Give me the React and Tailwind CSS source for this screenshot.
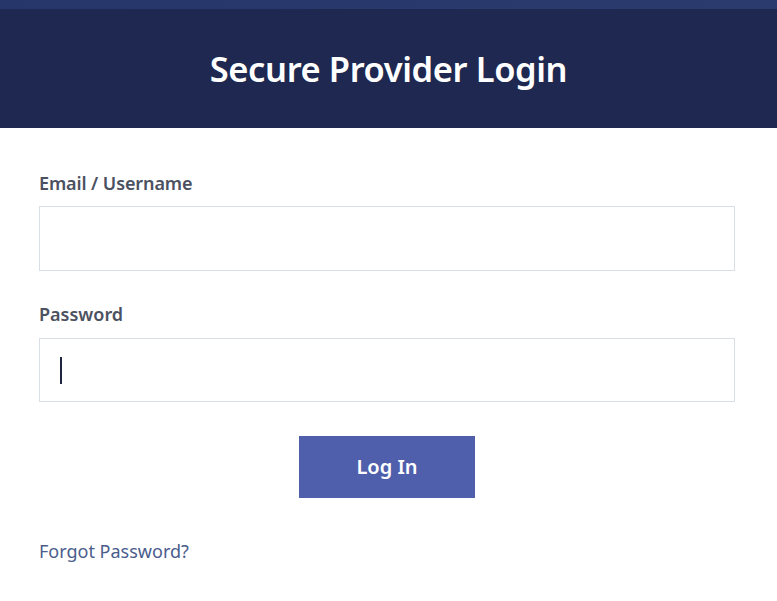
export default function App() {
  return (
    <div className="w-[777px] h-[601px] bg-white overflow-hidden" style={{ fontFamily: '"Noto Sans", "Open Sans", sans-serif' }}>
      <div className="h-[9px] bg-gradient-to-r from-[#27366a] to-[#2c3b6e]" />
      <div className="h-[119px] bg-[#1e2850] flex items-center justify-center">
        <h1 className="text-[34.5px] font-semibold text-white leading-none tracking-[-0.4px] mt-[2px]">Secure Provider Login</h1>
      </div>
      <div className="px-[39px] pt-[43px]">
        <label className="block text-[18px] font-semibold text-[#4b5160] leading-[24px] tracking-[-0.1px]">Email / Username</label>
        <input className="mt-[11px] block w-[696px] h-[65px] border border-[#d9dfe4] outline-none px-4" />
        <label className="block mt-[31px] text-[18px] font-semibold text-[#4b5160] leading-[24px]">Password</label>
        <div className="mt-[12px] w-[696px] h-[64px] border border-[#d9dfe4] flex items-center pl-[20px]">
          <div className="w-[2px] h-[27px] bg-[#1e2540]" />
        </div>
        <div className="mt-[34px] w-[696px] flex justify-center">
          <button className="w-[176px] h-[62px] bg-[#4f5fab] text-white text-[20px] font-semibold">Log In</button>
        </div>
        <a className="block mt-[41px] text-[18px] text-[#4a5d8c] leading-[24px]">Forgot Password?</a>
      </div>
    </div>
  );
}
